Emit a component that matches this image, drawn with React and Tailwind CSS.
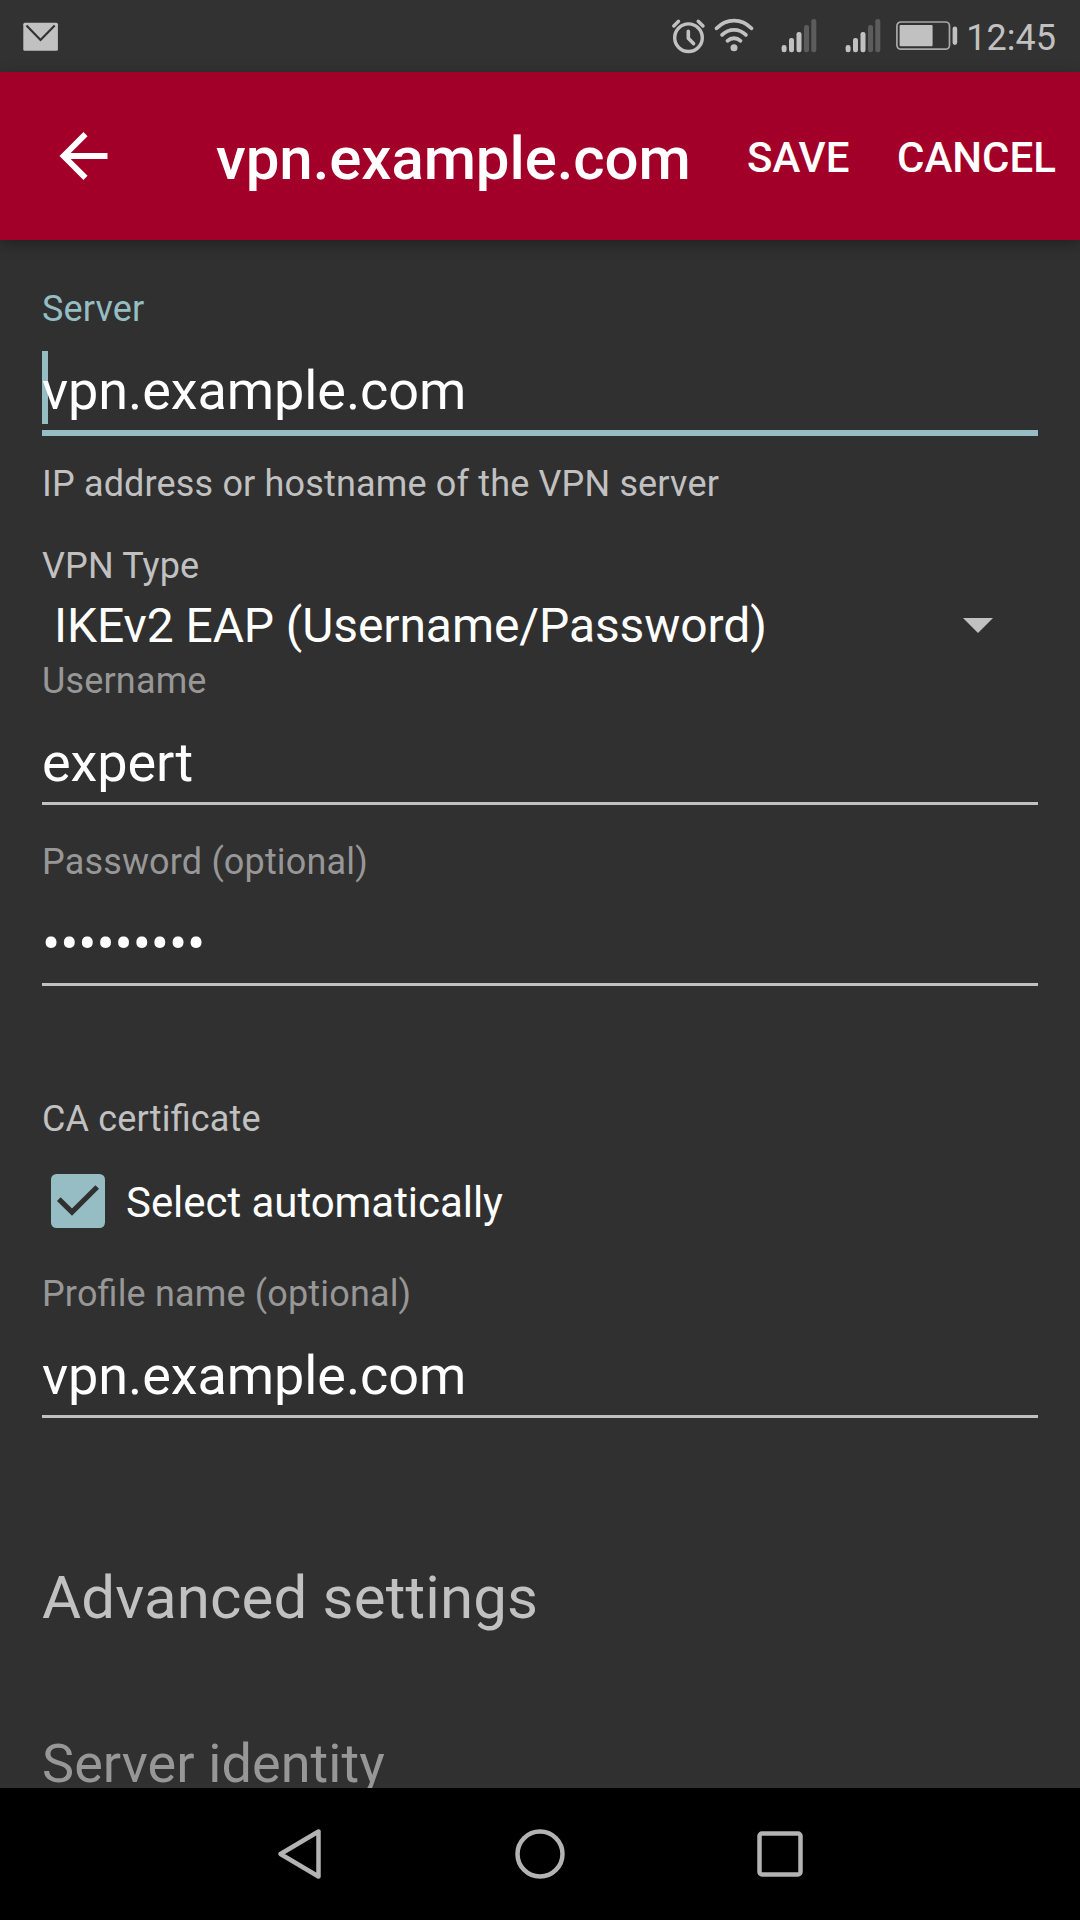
const label = "text-[36px] leading-[42px] whitespace-nowrap tracking-[0.16px] [font-feature-settings:'liga'_1]";
const inputText = "text-[54px] leading-[63px] text-white whitespace-nowrap tracking-[-0.08px]";

function Field({ name, value, className = "" }) {
  return (
    <div className={`flex flex-col ${className}`}>
      <div className={`${label} text-[#979797]`}>{name}</div>
      <div className={`${inputText} mt-[29px]`}>{value}</div>
      <div className="mt-2 h-[3px] bg-[#c1c1c1]" />
    </div>
  );
}

function Signal({ className = "" }) {
  return (
    <svg className={className} width="36" height="34" viewBox="0 0 36 34">
      <g fill="#c1c1c1">
        <rect x="0.6" y="26" width="5" height="7.3" rx="2.4" />
        <rect x="8" y="19" width="5" height="14.3" rx="2.2" />
        <rect x="15.5" y="13" width="5" height="20.3" rx="2.2" />
      </g>
      <g fill="#5c5c5c">
        <rect x="23" y="6" width="5" height="27.3" rx="2.2" />
        <rect x="30.3" y="0" width="5" height="33.3" rx="2.2" />
      </g>
    </svg>
  );
}

function StatusBar() {
  return (
    <div className="flex h-[72px] shrink-0 items-start bg-[#323232] pl-[23px] pr-6">
      <svg className="mt-[22px]" width="36" height="30" viewBox="0 0 36 30">
        <rect x="0.3" y="0.8" width="34.6" height="28" rx="1.5" fill="#c1c1c1" />
        <path d="M3.5 3.5 17.5 18 31.7 3.5" fill="none" stroke="#323232" strokeWidth="2.2" />
      </svg>
      <div className="flex-1" />
      <svg className="mt-[18px]" width="36" height="36" viewBox="0 0 36 36" fill="none" stroke="#c1c1c1" strokeLinecap="round">
        <circle cx="17.5" cy="19.7" r="13.8" strokeWidth="3.4" />
        <path d="M17.3 13.2v7.1l5.2 5.3" strokeWidth="3.6" strokeLinejoin="round" />
        <path d="M2.8 8 7.5 3.2M32 8 27.2 3.2" strokeWidth="3.4" />
      </svg>
      <svg className="ml-[7px] mt-[18px]" width="40" height="36" viewBox="0 0 40 36" fill="none" stroke="#c1c1c1" strokeWidth="3.8" strokeLinecap="round">
        <path d="M2.6 10.3C12.5.1 27.5.1 37.4 10.3" />
        <path d="M8.1 16.8c6.8-6.7 17-6.7 23.8 0" />
        <path d="M13.5 22.8c3.8-3.4 9.2-3.4 13 0" />
        <circle cx="20" cy="29.8" r="3.5" fill="#c1c1c1" stroke="none" />
      </svg>
      <Signal className="ml-[27px] mt-[19px]" />
      <Signal className="ml-7 mt-[19px]" />
      <svg className="ml-[15px] mt-5" width="62" height="32" viewBox="0 0 62 32">
        <rect x="0.9" y="2" width="52.6" height="27.2" rx="4" fill="none" stroke="#a8a8a8" strokeWidth="1.7" />
        <rect x="3.6" y="5" width="33" height="21.2" rx="1" fill="#c1c1c1" />
        <rect x="56.6" y="6.5" width="4.6" height="18.4" rx="2.3" fill="#c1c1c1" />
      </svg>
      <div className="ml-2 mt-[17px] text-[36px] leading-[42px] text-[#c1c1c1]">12:45</div>
    </div>
  );
}

function AppBar() {
  return (
    <div className="z-10 flex h-[168px] shrink-0 items-start bg-[#a30029] font-medium text-white shadow-[0_4px_14px_rgba(0,0,0,0.32)]">
      <svg className="ml-[59px] mt-[60px]" width="49" height="48" viewBox="0 0 48 48" fill="none" stroke="#fff" strokeWidth="5.8">
        <path d="M48 24H6M26 2.1 4.1 24 26 45.9" />
      </svg>
      <div className="ml-[108px] mt-[51px] w-[531px] text-[60px] leading-[71px] tracking-[-0.08px]">vpn.example.com</div>
      <div className="mt-[61px] w-[150px] text-[42px] leading-[49px]">SAVE</div>
      <div className="mt-[61px] text-[42px] leading-[49px] whitespace-nowrap">CANCEL</div>
    </div>
  );
}

function Form() {
  return (
    <div className="flex min-h-0 flex-1 flex-col overflow-hidden px-[42px] pt-12">
      <div className={`${label} text-[#96bdc3]`}>Server</div>
      <div className="mt-[21px] flex h-[73px]">
        <div className="h-[73px] w-[6px] bg-[#96bdc3]" />
        <div className={`${inputText} relative -ml-[6px] mt-2`}>vpn.example.com</div>
      </div>
      <div className="mt-[6px] h-[6px] shrink-0 bg-[#96bdc3]" />
      <div className={`${label} mt-[27px] text-[#c1c1c1]`}>IP address or hostname of the VPN server</div>
      <div className={`${label} mt-10 text-[#c1c1c1]`}>VPN Type</div>
      <div className="mt-[10px] flex h-[57px] items-center justify-between pl-3 pr-[45px]">
        <div className="text-[48px] leading-[57px] tracking-[-0.09px] whitespace-nowrap text-white">IKEv2 EAP (Username/Password)</div>
        <svg width="30" height="15" viewBox="0 0 30 15">
          <path d="M0 0h30L15 15z" fill="#c1c1c1" />
        </svg>
      </div>
      <Field className="mt-[6px]" name="Username" value="expert" />
      <Field className="mt-9" name="Password (optional)" value="•••••••••" />
      <div className={`${label} mt-28 text-[#c1c1c1]`}>CA certificate</div>
      <div className="mt-[34px] flex h-[54px] shrink-0 items-start pl-[9px]">
        <svg width="54" height="54" viewBox="0 0 54 54">
          <rect width="54" height="54" rx="5.5" fill="#96bdc3" />
          <path d="M7.8 25.2 21 38.2 46.2 13" fill="none" stroke="#303030" strokeWidth="5.2" />
        </svg>
        <div className="ml-[21px] mt-1 text-[42px] leading-[49px] tracking-[-0.05px] whitespace-nowrap text-white">Select automatically</div>
      </div>
      <Field className="mt-[45px]" name="Profile name (optional)" value="vpn.example.com" />
      <div className="mt-36 shrink-0 text-[60px] leading-[71px] tracking-[0.14px] text-[#c1c1c1]">Advanced settings</div>
      <div className="mt-[99px] h-[56px] shrink-0 overflow-hidden text-[54px] leading-[63px] tracking-[0.08px] text-[#979797]">Server identity</div>
    </div>
  );
}

function NavBar() {
  return (
    <div className="flex h-[132px] shrink-0 items-center justify-center gap-[190px] bg-black">
      <svg width="50" height="58" viewBox="0 0 50 58" fill="none" stroke="#b3b3b3" strokeWidth="4.5" strokeLinejoin="round">
        <path d="M43.5 6.5v45L5.5 29z" />
      </svg>
      <svg width="50" height="50" viewBox="0 0 50 50" fill="none" stroke="#b3b3b3" strokeWidth="4.5">
        <circle cx="25" cy="25" r="22.5" />
      </svg>
      <svg width="50" height="50" viewBox="0 0 50 50" fill="none" stroke="#b3b3b3" strokeWidth="4.5">
        <rect x="4.5" y="4.5" width="41" height="41" rx="2.5" />
      </svg>
    </div>
  );
}

export default function App() {
  return (
    <div className="flex h-[1920px] w-[1080px] flex-col overflow-hidden bg-[#303030] font-['Roboto',sans-serif]">
      <StatusBar />
      <AppBar />
      <Form />
      <NavBar />
    </div>
  );
}
